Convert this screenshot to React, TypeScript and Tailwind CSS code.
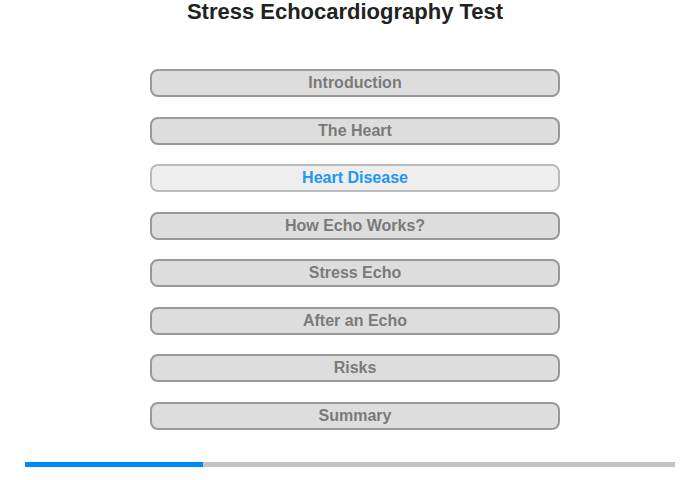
import React from "react";

const items = [
  "Introduction",
  "The Heart",
  "Heart Disease",
  "How Echo Works?",
  "Stress Echo",
  "After an Echo",
  "Risks",
  "Summary",
];

export default function App() {
  return (
    <div
      className="w-[700px] h-[480px] bg-white relative"
      style={{ fontFamily: '"Liberation Sans", Arial, sans-serif' }}
    >
      <h1 className="w-[690px] text-center text-[22px] leading-[22px] font-bold text-[#222] pt-[1px]">
        Stress Echocardiography Test
      </h1>
      <div className="ml-[150px] w-[410px] mt-[46px] flex flex-col gap-[19.5px]">
        {items.map((t) => {
          const active = t === "Heart Disease";
          return (
            <div
              key={t}
              className={
                active
                  ? "h-[28px] rounded-[8px] border-2 border-[#bbbbbb] bg-[#eeeeee] flex items-center justify-center text-[16px] font-bold text-[#2196f3]"
                  : "h-[28px] rounded-[8px] border-2 border-[#999999] bg-[#dddddd] flex items-center justify-center text-[16px] font-bold text-[#7a7a7a]"
              }
            >
              {t}
            </div>
          );
        })}
      </div>
      <div className="ml-[25px] w-[650px] h-[5px] bg-[#c4c4c4] mt-[32px] flex">
        <div className="w-[178px] h-full bg-[#0088ff]" />
      </div>
    </div>
  );
}
